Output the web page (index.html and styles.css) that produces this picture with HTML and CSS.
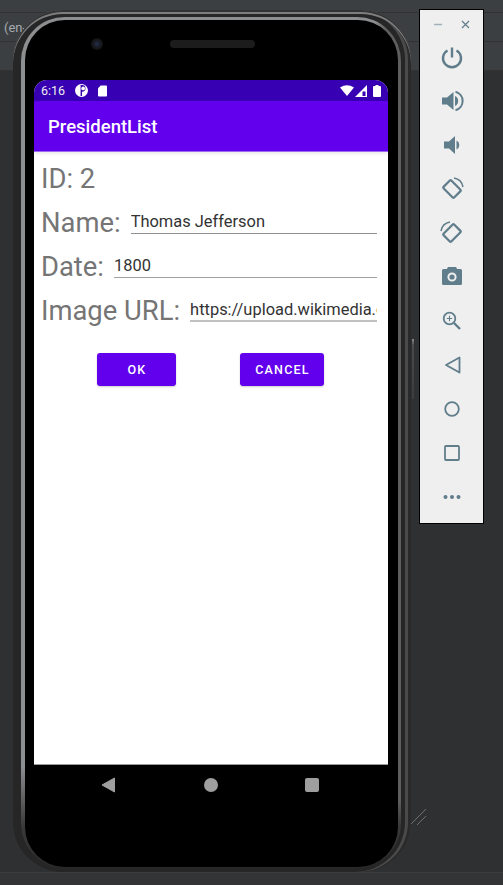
FILE: index.html
```html
<!DOCTYPE html>
<html lang="en">
<head>
<meta charset="utf-8">
<title>PresidentList</title>
<link rel="stylesheet" href="styles.css">
</head>
<body>
<div class="desktop">
  <div class="ide-bars">
    <div class="ide-bar ide-bar-a"></div>
    <div class="ide-bar ide-bar-b"><span class="ide-text">(en-</span></div>
    <div class="ide-bar ide-bar-c"></div>
  </div>
  <div class="ide-footer"></div>

  <svg class="grip" width="20" height="20" viewBox="0 0 20 20"><path d="M0 16 16 0M7 16 16 7" stroke="#8a8c8d" stroke-width=".7" fill="none"/></svg>
  <div class="side-key"></div>

  <div class="phone">
    <div class="rim">
      <div class="bezel">
        <div class="bezel-top">
          <span class="camera"></span>
          <span class="speaker"></span>
        </div>
        <div class="screen">
          <div class="status-bar">
            <span class="clock">6:16</span>
            <svg class="st-icon" width="13" height="13" viewBox="0 0 14 14"><circle cx="7" cy="7" r="7" fill="#fff"/><path d="M6 1v12h1.600V8.400A3.600 3.600 0 0 0 7.600 1z" fill="#3700b3"/><circle cx="8.800" cy="4.800" r="2" fill="#fff"/></svg>
            <svg class="st-icon" width="9" height="12" viewBox="0 0 10 12"><path d="M3 0h6a1 1 0 0 1 1 1v10a1 1 0 0 1-1 1H1a1 1 0 0 1-1-1V3z" fill="#fff"/></svg>
            <span class="status-spacer"></span>
            <svg class="st-wifi" width="14" height="11" viewBox="0 0 14 11"><path d="M0 2.500Q7-2 14 2.500L7 11z" fill="#fff"/></svg>
            <svg class="st-signal" width="12" height="12" viewBox="0 0 12 12"><path d="M0 12 12 0v12z" fill="#fff"/><path d="M7.500 6.500h3v4.500h-3z" fill="#3700b3"/></svg>
            <svg width="8" height="12" viewBox="0 0 8 12"><path d="M2.500 0h3v1H7a1 1 0 0 1 1 1v9a1 1 0 0 1-1 1H1a1 1 0 0 1-1-1V2a1 1 0 0 1 1-1h1.500z" fill="#fff"/></svg>
          </div>
          <div class="app-bar">PresidentList</div>
          <div class="content">
            <div class="row"><span class="label">ID: 2</span></div>
            <div class="row"><span class="label">Name:</span><div class="field field-name">Thomas Jefferson</div></div>
            <div class="row"><span class="label">Date:</span><div class="field field-date">1800</div></div>
            <div class="row"><span class="label">Image URL:</span><div class="field field-url">https://upload.wikimedia.org/wikipedia/commons</div></div>
            <div class="actions">
              <button class="btn btn-ok">OK</button>
              <button class="btn btn-cancel">CANCEL</button>
            </div>
          </div>
        </div>
        <div class="nav-bar">
          <svg class="nav-back" width="14" height="16" viewBox="0 0 14 16"><path d="M13.500 1v14L1 8z" fill="#9e9e9e" stroke="#9e9e9e" stroke-linejoin="round"/></svg>
          <svg width="14" height="14" viewBox="0 0 14 14"><circle cx="7" cy="7" r="7" fill="#9e9e9e"/></svg>
          <svg width="14" height="14" viewBox="0 0 14 14"><rect width="14" height="14" rx="2" fill="#9e9e9e"/></svg>
        </div>
      </div>
    </div>
  </div>

  <aside class="panel">
    <div class="panel-head">
      <svg width="9" height="9" viewBox="0 0 9 9"><path d="M0 4.500h8" stroke="#9fb0b8" stroke-width="1.500"/></svg>
      <svg width="9" height="9" viewBox="0 0 9 9"><path d="M1 1l7 7M8 1 1 8" stroke="#607d8b" stroke-width="1.200"/></svg>
    </div>
    <div class="panel-tools">
      <svg class="tool" viewBox="0 0 24 24"><path d="M12 2.500v10" stroke-width="2.400"/><path d="M7.500 5.500a9 9 0 1 0 9 0" stroke-width="2.400"/></svg>
      <svg class="tool" viewBox="0 0 24 24"><path class="fill" d="M2 8.500h5l6.500-5.500v18L7 15.500H2z"/><path class="fill" d="M15 7a5.500 5.500 0 0 1 0 10z"/><path d="M15.500 2.800a9.500 9.500 0 0 1 0 18.400" stroke-width="2"/></svg>
      <svg class="tool" viewBox="0 0 24 24"><path class="fill" d="M4 8.500h5l6-5.500v18l-6-5.500H4z"/><path class="fill" d="M16.500 7.500a5 5 0 0 1 0 9z"/></svg>
      <svg class="tool" viewBox="0 0 24 24"><rect x="4.500" y="6.500" width="15" height="11" rx="1" transform="rotate(45 12 12)" stroke-width="2.200"/><path d="M14 1a11 11 0 0 1 9 9" stroke-width="1.500"/></svg>
      <svg class="tool" viewBox="0 0 24 24"><rect x="4.500" y="6.500" width="15" height="11" rx="1" transform="rotate(-45 12 12)" stroke-width="2.200"/><path d="M10 1A11 11 0 0 0 1 10" stroke-width="1.500"/></svg>
      <svg class="tool" viewBox="0 0 24 24"><path class="fill" d="M8 2h8l1.200 2H20.500A1.500 1.500 0 0 1 22 5.500v13a1.500 1.500 0 0 1-1.500 1.500h-17A1.500 1.500 0 0 1 2 18.500v-13A1.500 1.500 0 0 1 3.500 4h3.300z"/><circle cx="12" cy="12" r="3.600" stroke="#eee" stroke-width="2"/></svg>
      <svg class="tool" viewBox="0 0 24 24"><circle cx="9.500" cy="9.500" r="5.800" stroke-width="1.800"/><path d="M14 14l6 6" stroke-width="2.400"/><path d="M9.500 6.800v5.400M6.800 9.500h5.400" stroke-width="1.100"/></svg>
      <svg class="tool" viewBox="0 0 24 24"><path d="M19.500 4.500v15L6 12z" stroke-width="1.800" stroke-linejoin="round"/></svg>
      <svg class="tool" viewBox="0 0 24 24"><circle cx="12" cy="12" r="6.800" stroke-width="1.800"/></svg>
      <svg class="tool" viewBox="0 0 24 24"><rect x="5" y="5" width="14" height="14" rx="1" stroke-width="1.800"/></svg>
      <svg class="tool" viewBox="0 0 24 24"><circle class="fill" cx="5.500" cy="12" r="2" /><circle class="fill" cx="12" cy="12" r="2"/><circle class="fill" cx="18.500" cy="12" r="2"/></svg>
    </div>
  </aside>
</div>
</body>
</html>
```
FILE: styles.css
```css
* { box-sizing: border-box; }
html, body { margin: 0; height: 100%; }
body { background: #2f3031; font-family: Roboto, "Liberation Sans", sans-serif; overflow: hidden; }
.desktop { position: relative; width: 503px; height: 885px; overflow: hidden; }

.ide-bars { display: flex; flex-direction: column; }
.ide-bar { background: #3c3f41; border-bottom: 1px solid #323232; }
.ide-bar-a { height: 13px; }
.ide-bar-b { height: 29px; padding-left: 4px; }
.ide-bar-c { height: 29px; }
.ide-text { color: #a4abaf; font-size: 13px; line-height: 29px; }
.ide-footer { position: absolute; left: 0; right: 0; bottom: 0; height: 13px; background: #323435; border-top: 1px solid #3a3c3d; }

.grip { position: absolute; left: 410px; top: 809px; }
.side-key { position: absolute; left: 412px; top: 339px; width: 2px; height: 60px; background: linear-gradient(#8a8a8a,#4a4a4a 10%,#3c3c3c); }

.phone { position: absolute; left: 13px; top: 10px; width: 398px; height: 862px; border-radius: 50px; background: #262626; padding: 7px 10px 4px 8px;
  box-shadow: inset 0 2px 0 #333, inset 0 4px 0 #7d7e80, inset -3px 0 0 #2a2a2a, inset -6px 0 0 #4a4a4a; }
.rim { height: 100%; border-radius: 44px; padding: 3px 3px 1px 4px;
  background:
    linear-gradient(90deg, transparent 93%, #5e5e5e 96%) 0 0 / 100% 92% no-repeat,
    linear-gradient(180deg, #8d8e90 0, #8d8e90 88%, #3a3a3a 95%, #2a2a2a 100%); }
.bezel { height: 100%; background: #000; border-radius: 40px; padding: 0 10px 0 9px; display: flex; flex-direction: column; }
.bezel-top { height: 60px; flex: none; display: flex; align-items: flex-start; padding: 18px 0 0 57px; }
.camera { width: 12px; height: 12px; border-radius: 50%; background: radial-gradient(circle,#23304d 0,#1a1d27 35%,#101112 70%); margin-right: 67px; }
.speaker { width: 85px; height: 8px; border-radius: 4px; background: #1c1c1c; margin-top: 2px; }

.screen { width: 354px; height: 685px; flex: none; background: #fff; border-radius: 13px 13px 0 0; overflow: hidden; display: flex; flex-direction: column; border-bottom: 1px solid #9a9a9a; }
.status-bar { height: 21px; flex: none; background: #3700b3; color: #eee; display: flex; align-items: center; padding: 0 7px; font-size: 12.500px; }
.clock { margin-right: 10px; }
.st-icon { margin-right: 10px; }
.status-spacer { flex: 1; }
.st-wifi { margin-right: 1px; }
.st-signal { margin-right: 6px; }
.app-bar { height: 51px; flex: none; background: #6200ee; border-bottom: 1px solid #9a6af2; color: #fff; font-size: 18.500px; font-weight: 500; line-height: 53px; padding-left: 14px; box-shadow: 0 2px 3px rgba(0,0,0,.08); }

.content { padding: 5px 11px 0 7px; }
.row { height: 44px; display: flex; align-items: flex-end; }
.label { color: #757575; font-size: 27.400px; line-height: 44px; flex: none; }
.field { flex: 1; min-width: 0; margin-left: 10px; height: 25px; margin-bottom: 11px; border-bottom: 1px solid #8f8f8f; color: #333; font-size: 16.450px; line-height: 25px; white-space: nowrap; overflow: hidden; }
.field-date { border-bottom-color: #a0a0a0; }
.field-url { border-bottom: 2px solid #c0c0c0; }
.actions { display: flex; padding: 20px 0 0 56px; }
.btn { height: 33px; border: 0; border-radius: 3px; background: #6200ee; color: #fff; font: 500 12.500px Roboto, sans-serif; letter-spacing: 1.200px; padding: 0 0 0 1px; box-shadow: 0 1px 2px rgba(0,0,0,.2); }
.btn-ok { width: 79px; margin-right: 64px; }
.btn-cancel { width: 84px; }

.nav-bar { flex: 1; display: flex; align-items: flex-start; padding: 13px 0 0 67px; gap: 87px; }
.nav-back { margin-right: 2px; margin-top: -1px; }

.panel { position: absolute; left: 419px; top: 9px; width: 65px; height: 515px; background: #efefef; border: 1px solid #000; }
.panel-head { display: flex; justify-content: space-between; padding: 10px 13px 0 14px; height: 24px; }
.panel-tools { display: flex; flex-direction: column; align-items: center; gap: 20px; padding: 11px 0 0 0; }
.tool { width: 24px; height: 24px; fill: none; stroke: #607d8b; flex: none; }
.tool .fill { fill: #607d8b; stroke: none; }
```
